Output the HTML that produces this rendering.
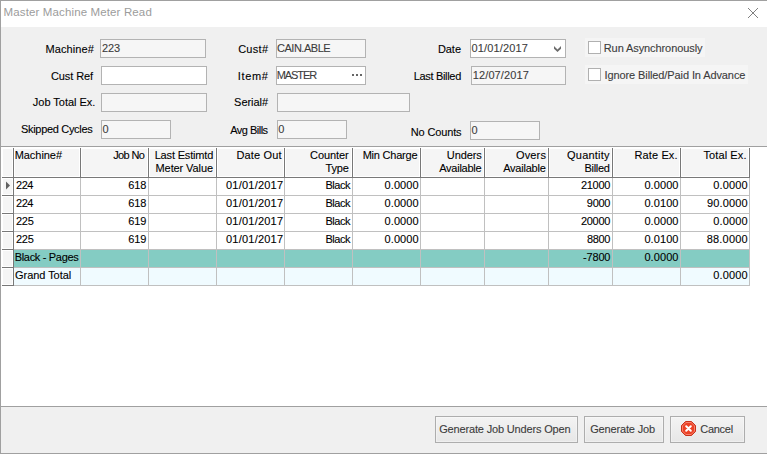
<!DOCTYPE html><html><head><meta charset="utf-8"><title>Master Machine Meter Read</title><style>
*{box-sizing:border-box;margin:0;padding:0}
html,body{width:767px;height:454px;overflow:hidden;background:#f0f0f0}
body{font-family:"Liberation Sans",sans-serif;font-size:11px;color:#000;position:relative}
.a{position:absolute}
.t{position:absolute;white-space:nowrap;line-height:13px;height:13px;-webkit-text-stroke:0.1px currentColor}
.in{position:absolute;border:1px solid #b3b3b3;background:#f6f6f6;height:19px}
.in.w{background:#fff}
.it{color:#3c3c3c}
.ti{color:#9c9c9c;font-size:11.5px;-webkit-text-stroke:0}
.cb{position:absolute;width:13px;height:13px;border:1px solid #b0b0b0;background:#fff}
.cbp{position:absolute;background:#f5f5f5;height:19px}
.btn{position:absolute;top:416px;height:27px;border:1px solid #adadad;background:linear-gradient(#f3f3f3,#e7e7e7);box-shadow:inset 0 0 0 1px rgba(255,255,255,.35)}
.hl{position:absolute;background:#c0c0c0;height:1px}
.vl{position:absolute;background:#c0c0c0;width:1px}
.dk{background:#787878}
</style></head><body>
<div class="a" style="left:0;top:0;width:767px;height:27px;background:#fff"></div>
<svg class="a" style="left:747px;top:7px" width="12" height="12" viewBox="0 0 12 12"><path d="M1 1 L11 11 M11 1 L1 11" stroke="#808080" stroke-width="1" fill="none"/></svg>
<div class="in" style="left:100px;top:39px;width:106px"></div>
<div class="in w" style="left:101px;top:66px;width:106px"></div>
<div class="in" style="left:101px;top:93px;width:106px"></div>
<div class="in" style="left:101px;top:120px;width:70px"></div>
<div class="in" style="left:276px;top:39px;width:90px"></div>
<div class="in w" style="left:276px;top:66px;width:90px"></div>
<div class="a" style="left:352px;top:74px;width:2px;height:2px;background:#666"></div><div class="a" style="left:356px;top:74px;width:2px;height:2px;background:#666"></div><div class="a" style="left:360px;top:74px;width:2px;height:2px;background:#666"></div>
<div class="in" style="left:277px;top:93px;width:133px"></div>
<div class="in" style="left:277px;top:120px;width:70px"></div>
<div class="in w" style="left:470px;top:39px;width:96px"></div>
<svg class="a" style="left:554px;top:46px" width="7" height="7" viewBox="0 0 7 7"><polygon points="0,0 3.5,3.4 7,0 7,2.7 3.5,6.1 0,2.7" fill="#6c6c6c"/></svg>
<div class="in" style="left:471px;top:66px;width:95px"></div>
<div class="in" style="left:470px;top:121px;width:70px"></div>
<div class="cbp" style="left:585px;top:38px;width:120px"></div><div class="cb" style="left:588px;top:41px"></div>
<div class="cbp" style="left:585px;top:65px;width:163px"></div><div class="cb" style="left:588px;top:68px"></div>
<div class="a" style="left:0;top:146px;width:767px;height:261px;background:#fff;border-top:1px solid #a0a0a0;border-bottom:1px solid #a0a0a0"></div>
<div class="a" style="left:3px;top:149px;width:9px;height:27px;background:#f5f5f5"></div>
<div class="a" style="left:15px;top:149px;width:64px;height:27px;background:#f5f5f5"></div>
<div class="a" style="left:82px;top:149px;width:65px;height:27px;background:#f5f5f5"></div>
<div class="a" style="left:150px;top:149px;width:65px;height:27px;background:#f5f5f5"></div>
<div class="a" style="left:218px;top:149px;width:65px;height:27px;background:#f5f5f5"></div>
<div class="a" style="left:286px;top:149px;width:65px;height:27px;background:#f5f5f5"></div>
<div class="a" style="left:354px;top:149px;width:65px;height:27px;background:#f5f5f5"></div>
<div class="a" style="left:422px;top:149px;width:61px;height:27px;background:#f5f5f5"></div>
<div class="a" style="left:486px;top:149px;width:61px;height:27px;background:#f5f5f5"></div>
<div class="a" style="left:550px;top:149px;width:61px;height:27px;background:#f5f5f5"></div>
<div class="a" style="left:614px;top:149px;width:65px;height:27px;background:#f5f5f5"></div>
<div class="a" style="left:682px;top:149px;width:66px;height:27px;background:#f5f5f5"></div>
<div class="a" style="left:3px;top:179px;width:9px;height:15px;background:#f5f5f5"></div>
<div class="a" style="left:3px;top:197px;width:9px;height:15px;background:#f5f5f5"></div>
<div class="a" style="left:3px;top:215px;width:9px;height:15px;background:#f5f5f5"></div>
<div class="a" style="left:3px;top:233px;width:9px;height:15px;background:#f5f5f5"></div>
<div class="a" style="left:3px;top:251px;width:9px;height:15px;background:#f5f5f5"></div>
<div class="a" style="left:3px;top:269px;width:9px;height:15px;background:#f5f5f5"></div>
<div class="a" style="left:14px;top:250px;width:735px;height:17px;background:#84ccc3"></div>
<div class="a" style="left:14px;top:268px;width:735px;height:17px;background:#f0fbff"></div>
<div class="vl" style="left:80px;top:178px;height:108px"></div>
<div class="vl" style="left:148px;top:178px;height:108px"></div>
<div class="vl" style="left:216px;top:178px;height:108px"></div>
<div class="vl" style="left:284px;top:178px;height:108px"></div>
<div class="vl" style="left:352px;top:178px;height:108px"></div>
<div class="vl" style="left:420px;top:178px;height:108px"></div>
<div class="vl" style="left:484px;top:178px;height:108px"></div>
<div class="vl" style="left:548px;top:178px;height:108px"></div>
<div class="vl" style="left:612px;top:178px;height:108px"></div>
<div class="vl" style="left:680px;top:178px;height:108px"></div>
<div class="vl" style="left:749px;top:178px;height:108px"></div>
<div class="hl" style="left:14px;top:195px;width:736px"></div>
<div class="hl dk" style="left:2px;top:195px;width:12px"></div>
<div class="hl" style="left:14px;top:213px;width:736px"></div>
<div class="hl dk" style="left:2px;top:213px;width:12px"></div>
<div class="hl" style="left:14px;top:231px;width:736px"></div>
<div class="hl dk" style="left:2px;top:231px;width:12px"></div>
<div class="hl" style="left:14px;top:249px;width:736px"></div>
<div class="hl dk" style="left:2px;top:249px;width:12px"></div>
<div class="hl" style="left:14px;top:267px;width:736px"></div>
<div class="hl dk" style="left:2px;top:267px;width:12px"></div>
<div class="hl" style="left:14px;top:285px;width:736px"></div>
<div class="hl dk" style="left:2px;top:285px;width:12px"></div>
<div class="hl dk" style="left:2px;top:177px;width:748px"></div>
<div class="vl dk" style="left:13px;top:148px;height:30px"></div>
<div class="vl dk" style="left:80px;top:148px;height:30px"></div>
<div class="vl dk" style="left:148px;top:148px;height:30px"></div>
<div class="vl dk" style="left:216px;top:148px;height:30px"></div>
<div class="vl dk" style="left:284px;top:148px;height:30px"></div>
<div class="vl dk" style="left:352px;top:148px;height:30px"></div>
<div class="vl dk" style="left:420px;top:148px;height:30px"></div>
<div class="vl dk" style="left:484px;top:148px;height:30px"></div>
<div class="vl dk" style="left:548px;top:148px;height:30px"></div>
<div class="vl dk" style="left:612px;top:148px;height:30px"></div>
<div class="vl dk" style="left:680px;top:148px;height:30px"></div>
<div class="vl dk" style="left:749px;top:148px;height:30px"></div>
<div class="vl dk" style="left:13px;top:178px;height:108px"></div>
<svg class="a" style="left:5px;top:181px" width="6" height="9" viewBox="0 0 6 9"><path d="M1 0.5 L5 4.5 L1 8.5 Z" fill="#606060"/></svg>
<div class="a" style="left:0;top:407px;width:767px;height:47px;background:#f0f0f0"></div>
<div class="btn" style="left:435px;width:143px"></div>
<div class="btn" style="left:584px;width:80px"></div>
<div class="btn" style="left:670px;width:75px"></div>
<svg class="a" style="left:681px;top:421px" width="15" height="15" viewBox="0 0 15 15"><polygon points="4.5,0.5 10.5,0.5 14.5,4.5 14.5,10.5 10.5,14.5 4.5,14.5 0.5,10.5 0.5,4.5" fill="#ec4226" stroke="#c8301a" stroke-width="1"/><polygon points="4.9,1.5 10.1,1.5 13.5,4.9 13.5,10.1 10.1,13.5 4.9,13.5 1.5,10.1 1.5,4.9" fill="none" stroke="#f6836e" stroke-width="1"/><path d="M5.2 5.2 L9.8 9.8 M9.8 5.2 L5.2 9.8" stroke="#fff" stroke-width="2" stroke-linecap="round"/></svg>
<div class="t ti" style="left:3.59px;top:6px;letter-spacing:0.13px">Master Machine Meter Read</div>
<div class="t" style="left:45.52px;top:43px;letter-spacing:0.1px">Machine#</div>
<div class="t" style="left:50.95px;top:70px;letter-spacing:-0.08px">Cust Ref</div>
<div class="t" style="left:32.87px;top:96px;letter-spacing:-0.02px">Job Total Ex.</div>
<div class="t" style="left:21.05px;top:123px;letter-spacing:-0.32px">Skipped Cycles</div>
<div class="t" style="left:238.15px;top:43px;letter-spacing:0.28px">Cust#</div>
<div class="t" style="left:237.76px;top:70px;letter-spacing:0.68px">Item#</div>
<div class="t" style="left:234.1px;top:96px;letter-spacing:-0.04px">Serial#</div>
<div class="t" style="left:230.26px;top:124px;letter-spacing:-0.52px">Avg Bills</div>
<div class="t" style="left:437.9px;top:43px;letter-spacing:-0.04px">Date</div>
<div class="t" style="left:413.72px;top:70px;letter-spacing:-0.32px">Last Billed</div>
<div class="t" style="left:410.7px;top:126px;letter-spacing:-0.13px">No Counts</div>
<div class="t it" style="left:102.03px;top:42px;letter-spacing:-0.18px">223</div>
<div class="t it" style="left:102.61px;top:123px">0</div>
<div class="t it" style="left:277px;top:42px;letter-spacing:-0.48px">CAIN.ABLE</div>
<div class="t it" style="left:276.65px;top:69px;letter-spacing:-1.07px">MASTER</div>
<div class="t it" style="left:278.23px;top:123px">0</div>
<div class="t it" style="left:471.61px;top:42px;letter-spacing:0.14px">01/01/2017</div>
<div class="t it" style="left:472.8px;top:69px;letter-spacing:0.1px">12/07/2017</div>
<div class="t it" style="left:471.61px;top:124px">0</div>
<div class="t it" style="left:603.75px;top:42px;letter-spacing:-0.09px">Run Asynchronously</div>
<div class="t it" style="left:604.5px;top:69px;letter-spacing:-0.1px">Ignore Billed/Paid In Advance</div>
<div class="t" style="left:14.7px;top:149px;letter-spacing:-0.05px">Machine#</div>
<div class="t" style="left:113.26px;top:149px;letter-spacing:-0.64px">Job No</div>
<div class="t" style="left:154.64px;top:149px;letter-spacing:-0.16px">Last Estimtd</div>
<div class="t" style="left:155.56px;top:162px;letter-spacing:-0.1px">Meter Value</div>
<div class="t" style="left:236.54px;top:149px;letter-spacing:0.14px">Date Out</div>
<div class="t" style="left:310.1px;top:149px;letter-spacing:-0.1px">Counter</div>
<div class="t" style="left:325.48px;top:162px;letter-spacing:-0.18px">Type</div>
<div class="t" style="left:362.63px;top:149px;letter-spacing:-0.22px">Min Charge</div>
<div class="t" style="left:446.85px;top:149px;letter-spacing:-0.12px">Unders</div>
<div class="t" style="left:439.19px;top:162px;letter-spacing:-0.25px">Available</div>
<div class="t" style="left:516.07px;top:149px;letter-spacing:0.12px">Overs</div>
<div class="t" style="left:503.19px;top:162px;letter-spacing:-0.23px">Available</div>
<div class="t" style="left:567.04px;top:149px;letter-spacing:0.22px">Quantity</div>
<div class="t" style="left:584.59px;top:162px;letter-spacing:-0.31px">Billed</div>
<div class="t" style="left:634.42px;top:149px;letter-spacing:0.14px">Rate Ex.</div>
<div class="t" style="left:703.42px;top:149px;letter-spacing:0.11px">Total Ex.</div>
<div class="t" style="left:16.02px;top:179px;letter-spacing:-0.45px">224</div>
<div class="t" style="left:128.32px;top:179px;letter-spacing:-0.14px">618</div>
<div class="t" style="left:226.04px;top:179px;letter-spacing:0.22px">01/01/2017</div>
<div class="t" style="left:325.54px;top:179px;letter-spacing:-0.5px">Black</div>
<div class="t" style="left:384.6px;top:179px;letter-spacing:0.06px">0.0000</div>
<div class="t" style="left:580.88px;top:179px;letter-spacing:-0.25px">21000</div>
<div class="t" style="left:644.39px;top:179px;letter-spacing:0.09px">0.0000</div>
<div class="t" style="left:713.14px;top:179px;letter-spacing:0.18px">0.0000</div>
<div class="t" style="left:16.02px;top:197px;letter-spacing:-0.45px">224</div>
<div class="t" style="left:128.32px;top:197px;letter-spacing:-0.14px">618</div>
<div class="t" style="left:226.04px;top:197px;letter-spacing:0.22px">01/01/2017</div>
<div class="t" style="left:325.54px;top:197px;letter-spacing:-0.5px">Black</div>
<div class="t" style="left:384.6px;top:197px;letter-spacing:0.06px">0.0000</div>
<div class="t" style="left:586.84px;top:197px;letter-spacing:-0.28px">9000</div>
<div class="t" style="left:644.39px;top:197px;letter-spacing:0.09px">0.0100</div>
<div class="t" style="left:707.06px;top:197px;letter-spacing:0.13px">90.0000</div>
<div class="t" style="left:16.02px;top:215px;letter-spacing:-0.29px">225</div>
<div class="t" style="left:128.32px;top:215px;letter-spacing:-0.11px">619</div>
<div class="t" style="left:226.04px;top:215px;letter-spacing:0.22px">01/01/2017</div>
<div class="t" style="left:325.54px;top:215px;letter-spacing:-0.5px">Black</div>
<div class="t" style="left:384.6px;top:215px;letter-spacing:0.06px">0.0000</div>
<div class="t" style="left:580.88px;top:215px;letter-spacing:-0.25px">20000</div>
<div class="t" style="left:644.39px;top:215px;letter-spacing:0.09px">0.0000</div>
<div class="t" style="left:713.14px;top:215px;letter-spacing:0.18px">0.0000</div>
<div class="t" style="left:16.02px;top:233px;letter-spacing:-0.29px">225</div>
<div class="t" style="left:128.32px;top:233px;letter-spacing:-0.11px">619</div>
<div class="t" style="left:226.04px;top:233px;letter-spacing:0.22px">01/01/2017</div>
<div class="t" style="left:325.54px;top:233px;letter-spacing:-0.5px">Black</div>
<div class="t" style="left:384.6px;top:233px;letter-spacing:0.06px">0.0000</div>
<div class="t" style="left:586.91px;top:233px;letter-spacing:-0.3px">8800</div>
<div class="t" style="left:644.39px;top:233px;letter-spacing:0.09px">0.0100</div>
<div class="t" style="left:706.75px;top:233px;letter-spacing:0.19px">88.0000</div>
<div class="t" style="left:14.72px;top:251px;letter-spacing:-0.32px">Black - Pages</div>
<div class="t" style="left:583.11px;top:251px;letter-spacing:-0.2px">-7800</div>
<div class="t" style="left:644.39px;top:251px;letter-spacing:0.09px">0.0000</div>
<div class="t" style="left:15.08px;top:269px;letter-spacing:-0.06px">Grand Total</div>
<div class="t" style="left:713.14px;top:269px;letter-spacing:0.18px">0.0000</div>
<div class="t it" style="left:439.16px;top:423px;letter-spacing:-0.16px">Generate Job Unders Open</div>
<div class="t it" style="left:590.16px;top:423px;letter-spacing:-0.15px">Generate Job</div>
<div class="t it" style="left:700.33px;top:423px;letter-spacing:-0.3px">Cancel</div>
<div class="a" style="left:0;top:0;width:767px;height:1px;background:#a0a0a0"></div>
<div class="a" style="left:0;top:0;width:1px;height:454px;background:#a0a0a0"></div>
<div class="a" style="left:0;top:453px;width:767px;height:1px;background:#a0a0a0"></div>
</body></html>
